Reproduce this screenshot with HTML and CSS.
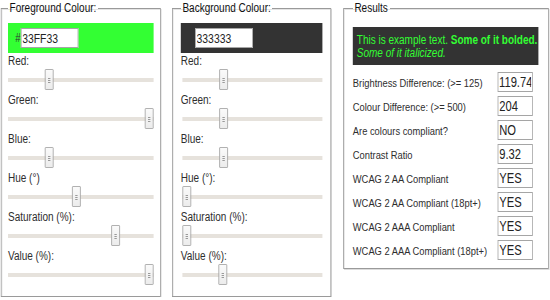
FILE: index.html
```html
<!DOCTYPE html>
<html>
<head>
<meta charset="utf-8">
<link rel="stylesheet" href="styles.css">
</head>
<body>
<div class="page">
  <fieldset class="panel panel-fg">
    <legend>Foreground Colour:</legend>
    <div class="swatch swatch-fg"><span class="hash">#</span><input class="hex" type="text" value="33FF33"></div>
    <div class="ctl"><div class="lbl">Red:</div><div class="slider"><div class="track"></div><div class="thumb" style="left:46px"></div></div></div>
    <div class="ctl"><div class="lbl">Green:</div><div class="slider"><div class="track"></div><div class="thumb" style="left:171px"></div></div></div>
    <div class="ctl"><div class="lbl">Blue:</div><div class="slider"><div class="track"></div><div class="thumb" style="left:46px"></div></div></div>
    <div class="ctl"><div class="lbl">Hue (°)</div><div class="slider"><div class="track"></div><div class="thumb" style="left:80px"></div></div></div>
    <div class="ctl"><div class="lbl">Saturation (%):</div><div class="slider"><div class="track"></div><div class="thumb" style="left:129px"></div></div></div>
    <div class="ctl"><div class="lbl">Value (%):</div><div class="slider"><div class="track"></div><div class="thumb" style="left:171px"></div></div></div>
  </fieldset>
  <fieldset class="panel panel-bg">
    <legend>Background Colour:</legend>
    <div class="swatch swatch-bg"><span class="hash">#</span><input class="hex" type="text" value="333333"></div>
    <div class="ctl"><div class="lbl">Red:</div><div class="slider"><div class="track"></div><div class="thumb" style="left:46px"></div></div></div>
    <div class="ctl"><div class="lbl">Green:</div><div class="slider"><div class="track"></div><div class="thumb" style="left:46px"></div></div></div>
    <div class="ctl"><div class="lbl">Blue:</div><div class="slider"><div class="track"></div><div class="thumb" style="left:46px"></div></div></div>
    <div class="ctl"><div class="lbl">Hue (°):</div><div class="slider"><div class="track"></div><div class="thumb" style="left:0px"></div></div></div>
    <div class="ctl"><div class="lbl">Saturation (%):</div><div class="slider"><div class="track"></div><div class="thumb" style="left:0px"></div></div></div>
    <div class="ctl"><div class="lbl">Value (%):</div><div class="slider"><div class="track"></div><div class="thumb" style="left:45px"></div></div></div>
  </fieldset>
  <fieldset class="panel panel-res">
    <legend>Results</legend>
    <div class="sample">This is example text. <b>Some of it bolded.</b><br><i>Some of it italicized.</i></div>
    <div class="row"><span class="rl">Brightness Difference: (&gt;= 125)</span><input class="val" type="text" value="119.74"></div>
    <div class="row"><span class="rl">Colour Difference: (&gt;= 500)</span><input class="val" type="text" value="204"></div>
    <div class="row"><span class="rl">Are colours compliant?</span><input class="val" type="text" value="NO"></div>
    <div class="row"><span class="rl">Contrast Ratio</span><input class="val" type="text" value="9.32"></div>
    <div class="row"><span class="rl">WCAG 2 AA Compliant</span><input class="val" type="text" value="YES"></div>
    <div class="row"><span class="rl">WCAG 2 AA Compliant (18pt+)</span><input class="val" type="text" value="YES"></div>
    <div class="row"><span class="rl">WCAG 2 AAA Compliant</span><input class="val" type="text" value="YES"></div>
    <div class="row"><span class="rl">WCAG 2 AAA Compliant (18pt+)</span><input class="val" type="text" value="YES"></div>
  </fieldset>
</div>
</body>
</html>
```
FILE: styles.css
```css
* { box-sizing: border-box; }
html, body { margin: 0; padding: 0; background: #fff; overflow: hidden; }
body {
  font-family: "Liberation Sans", Arial, sans-serif;
  font-size: 12.5px;
  color: #2e2e2e;
}
/* the whole form is drawn horizontally condensed, as in the reference */
.page {
  display: flex;
  align-items: flex-start;
  width: 687px;
  padding: 1px 0 0 1px;
  transform: scaleX(0.8);
  transform-origin: 0 0;
}
.panel {
  margin: 0;
  border: 1px solid #9a9a9a;
  box-shadow: inset 1px 1px 0 #e4e4e4, 1px 1px 0 #dcdcdc;
  padding: 7px 8px 8px 8px;
}
.panel legend {
  padding: 0 2px;
  font-size: 12.5px;
  line-height: 15px;
  color: #111;
}
.panel-fg { width: 200px; }
.panel-bg { width: 199px; margin-left: 14px; padding-left: 10px; padding-right: 10px; }
.panel-res { width: 257px; margin-left: 15px; padding: 7px 12px 6px 11px; }
.swatch {
  height: 30px;
  display: flex;
  align-items: center;
  padding-left: 9px;
}
.swatch-fg { background: #33ff33; }
.swatch-bg { background: #333333; padding-left: 11px; }
.hash { color: #333; font-size: 12px; }
.hex {
  width: 72px;
  height: 20px;
  border: 1px solid #a5a5a5;
  margin: 0;
  padding: 0 1px;
  font-family: inherit;
  font-size: 13px;
  color: #222;
  background: #fff;
}
.ctl { height: 39px; }
.swatch + .ctl { margin-top: 1px; }
.lbl { height: 15px; line-height: 15px; }
.slider {
  position: relative;
  height: 24px;
}
.panel-bg .slider { margin: 0 0 0 2px; }
.track {
  position: absolute;
  left: 0; right: 0;
  top: 9px;
  height: 4px;
  background: #e6e2dc;
}
.thumb {
  position: absolute;
  top: 0;
  width: 11px;
  height: 21px;
  background: linear-gradient(#fafafa, #ececec);
  border: 1px solid #a8a8a8;
  border-radius: 1px;
}
.thumb::after {
  content: "";
  position: absolute;
  left: 3px;
  top: 8px;
  width: 3px;
  height: 1px;
  background: #9a9a9a;
  box-shadow: 0 2px 0 #9a9a9a, 0 4px 0 #9a9a9a;
}
.sample {
  background: #333333;
  color: #33ff33;
  padding: 7px 0 5px 5px;
  line-height: 13px;
  font-size: 12.5px;
  white-space: nowrap;
  margin-top: 4px;
}
.row {
  display: flex;
  align-items: center;
  justify-content: space-between;
  height: 24px;
  padding-right: 7px;
}
.sample + .row { margin-top: 5px; }
.rl { color: #2e2e2e; font-size: 11.7px; white-space: nowrap; }
.val {
  width: 44px;
  height: 20px;
  margin: 0;
  border: 1px solid #a5a5a5;
  padding: 0 1px;
  font-family: inherit;
  font-size: 14px;
  color: #222;
  background: #fff;
}
```
